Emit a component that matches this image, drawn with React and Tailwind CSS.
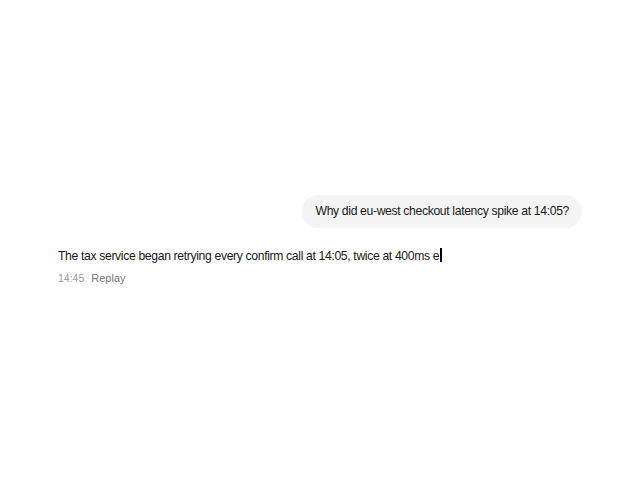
export default function App() {
  return (
    <div
      className="flex h-screen w-full items-center justify-center bg-white pt-[2px]"
      style={{ fontFamily: "'Liberation Sans', Arial, sans-serif" }}
    >
      <div className="flex w-[524px] flex-col">
        <div className="flex justify-end">
          <div className="rounded-[16px] bg-[#f4f4f4] px-[13px] py-[9px] text-[12.2px] leading-[15px] tracking-[-0.35px] text-[#1a1a1a]">
            Why did eu-west checkout latency spike at 14:05?
          </div>
        </div>
        <div className="mt-[18px] text-[12.2px] leading-[15px] tracking-[-0.35px] text-[#1a1a1a]">
          The tax service began retrying every confirm call at 14:05, twice at 400ms e
          <span className="ml-[1px] inline-block h-[14px] w-[2px] translate-y-[2px] bg-black" />
        </div>
        <div className="mt-[6px] flex items-center gap-[7px]">
          <span className="text-[10.5px] text-[#9a9a9a]">14:45</span>
          <span className="text-[11px] text-[#777777]">Replay</span>
        </div>
      </div>
    </div>
  );
}
